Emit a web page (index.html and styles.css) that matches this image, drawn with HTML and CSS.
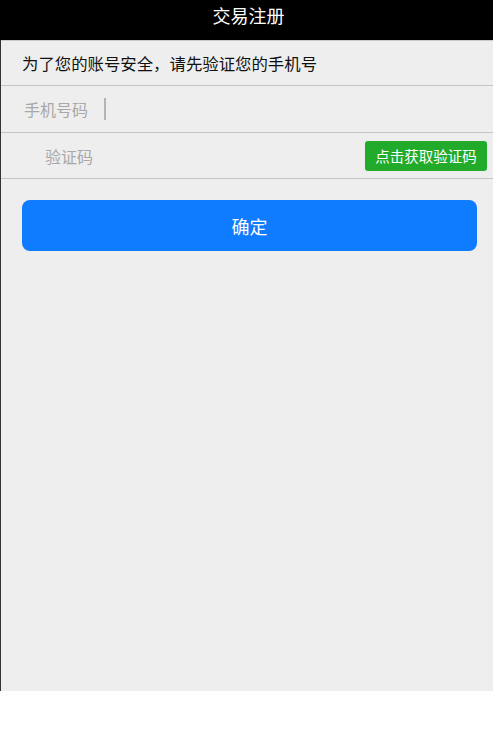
FILE: index.html
```html
<!DOCTYPE html>
<html lang="zh-CN">
<head>
<meta charset="utf-8">
<title>交易注册</title>
<link rel="stylesheet" href="styles.css">
</head>
<body>
<div class="page">
  <header class="topbar">交易注册</header>
  <div class="form">
    <div class="row tip">为了您的账号安全，请先验证您的手机号</div>
    <div class="row phone">
      <span class="label">手机号码</span>
      <span class="cursor"></span>
    </div>
    <div class="row code">
      <span class="label code-label">验证码</span>
      <button class="get-code" type="button">点击获取验证码</button>
    </div>
  </div>
  <div class="actions">
    <button class="confirm" type="button">确定</button>
  </div>
</div>
</body>
</html>
```
FILE: styles.css
```css
html, body {
  margin: 0;
  padding: 0;
  background: #ffffff;
}
body {
  font-family: "Noto Sans CJK SC", "Noto Sans", sans-serif;
}
.page {
  width: 492px;
  height: 691px;
  background: #eeeeee;
  border-left: 1px solid #333333;
  display: flex;
  flex-direction: column;
}
.topbar {
  height: 40px;
  background: #000000;
  color: #ffffff;
  font-size: 18px;
  line-height: 30px;
  text-align: center;
  margin-left: -1px;
  padding-left: 4px;
}
.form {
  border-top: 1px solid #c9c9c9;
}
.row {
  display: flex;
  align-items: center;
  border-bottom: 1px solid #c4c4c4;
  box-sizing: border-box;
}
.tip {
  height: 45px;
  padding-left: 21px;
  font-size: 16.4px;
  color: #111111;
}
.phone {
  height: 47px;
  padding-left: 23px;
}
.code {
  height: 46px;
  padding-left: 44px;
  padding-right: 6px;
  justify-content: space-between;
}
.label {
  font-size: 16px;
  color: #a8a8a8;
}
.cursor {
  width: 2px;
  height: 22px;
  background: #b4b4b4;
  margin-left: 16px;
}
.get-code {
  width: 122px;
  height: 30px;
  border: none;
  border-radius: 3px;
  background: #22ab2a;
  color: #ffffff;
  font-family: inherit;
  font-size: 14.5px;
  padding: 0;
}
.actions {
  padding: 21px 16px 0 21px;
}
.confirm {
  width: 100%;
  height: 51px;
  border: none;
  border-radius: 8px;
  background: #0f7cff;
  color: #ffffff;
  font-family: inherit;
  font-size: 18px;
  padding: 0;
}
```
